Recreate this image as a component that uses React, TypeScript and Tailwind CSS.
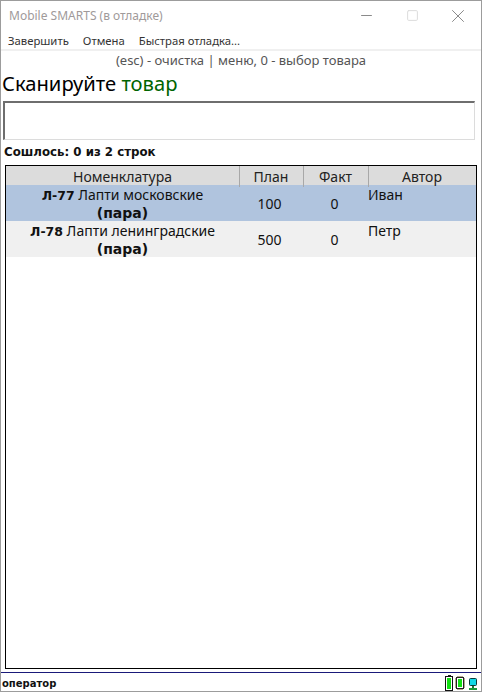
import { Minus, Square, X } from 'lucide-react'

const ROWS = [
  { code: 'Л-77', name: 'Лапти московские', plan: '100', fact: '0', author: 'Иван', bg: 'bg-[#b0c4de]' },
  { code: 'Л-78', name: 'Лапти ленинградские', plan: '500', fact: '0', author: 'Петр', bg: 'bg-[#f0f0f0]' },
]

const COLS = 'grid grid-cols-[234px_64px_65px_1fr]'
const bold = "font-['DejaVu_Sans'] font-bold"

function StatusIcons() {
  return (
    <svg width="34" height="16" viewBox="0 0 34 16" className="shrink-0">
      {/* battery */}
      <rect x="3" y="0" width="3" height="1" fill="#222" />
      <rect x="0.5" y="1.5" width="7" height="14" fill="#fff" stroke="#111" />
      <rect x="2" y="3" width="4" height="11" fill="#12e012" />
      {/* memory chip */}
      <path d="M10 4h1M10 6h1M10 8h1M10 10h1M10 12h1M19 4h1M19 6h1M19 8h1M19 10h1M19 12h1M13 1v1M15 1v1M17 1v1M13 14v1M15 14v1M17 14v1" stroke="#6a4a22" />
      <rect x="11.5" y="2.5" width="7" height="11" fill="#fff" stroke="#222" />
      <rect x="13" y="4" width="4" height="8" fill="#12e012" />
      {/* network */}
      <rect x="24.5" y="3.5" width="7" height="7" rx="1" fill="#12d8e8" stroke="#0a3a3a" />
      <rect x="27" y="11" width="2" height="2" fill="#1a7a3a" />
      <rect x="24" y="13" width="8" height="2" fill="#1a9a3a" />
    </svg>
  )
}

export default function App() {
  return (
    <div className="w-[482px] h-[692px] flex flex-col bg-white border border-[#9c9c9c] overflow-hidden font-['Noto_Sans',sans-serif] text-black">
      {/* Title bar */}
      <div className="h-[29px] shrink-0 flex items-center justify-between pl-[8px]">
        <span className="text-[12px] text-[#a09a9a]">Mobile SMARTS (в отладке)</span>
        <div className="flex items-center text-[#8a8a8a]">
          <span className="w-[46px] flex justify-center"><Minus size={17} strokeWidth={1} absoluteStrokeWidth /></span>
          <span className="w-[46px] flex justify-center text-[#dcdcdc]"><Square size={13} strokeWidth={1} absoluteStrokeWidth /></span>
          <span className="w-[46px] flex justify-center"><X size={22} strokeWidth={1} absoluteStrokeWidth /></span>
        </div>
      </div>

      {/* Menu */}
      <div className="h-[21px] shrink-0 flex items-center gap-[14px] pl-[7px] pt-[3px] border-b-2 border-[#f0f0f0] text-[11.3px] text-[#333]">
        <span>Завершить</span>
        <span>Отмена</span>
        <span>Быстрая отладка...</span>
      </div>

      {/* Scan area */}
      <div className="flex-1 min-h-0 flex flex-col">
        <div className="h-[19px] shrink-0 flex items-center justify-center text-[13px] text-[#555]">
          (esc) - очистка | меню, 0 - выбор товара
        </div>
        <div className="h-[31px] shrink-0 flex items-center pl-[1px] pb-[4px] text-[20.2px]">
          Сканируйте&nbsp;<span className="text-[#006400]">товар</span>
        </div>
        <div className="h-[39px] shrink-0 ml-[2px] mr-[6px] border border-[#dcdcdc] border-t-2 border-l-2 border-t-[#6e6e6e] border-l-[#6e6e6e] bg-white" />
        <div className={`h-[25px] shrink-0 flex items-center pl-[3px] text-[11.8px] text-[#111] ${bold}`}>
          Сошлось: 0 из 2 строк
        </div>

        {/* Table */}
        <div className="flex-1 min-h-0 mx-[4px] mb-[3px] border border-black bg-white text-[14px]">
          <div className={`${COLS} h-[19px] bg-[#dcdcdc] text-[#222]`}>
            <div className="flex items-center justify-center border-r border-[#a8a8a8]">Номенклатура</div>
            <div className="flex items-center justify-center pr-[1px] border-r border-[#a8a8a8]">План</div>
            <div className="flex items-center justify-center pr-[1px] border-r border-[#a8a8a8]">Факт</div>
            <div className="flex items-center justify-center pr-[1px]">Автор</div>
          </div>
          {ROWS.map((r) => (
            <div key={r.code} className={`${COLS} h-[36px] ${r.bg} text-[#111]`}>
              <div className="flex flex-col items-center pr-[1px] leading-[18px]">
                <div className="pt-[1px]">
                  <span className={`text-[12.5px] ${bold}`}>{r.code}</span> {r.name}
                </div>
                <div className={`text-[14px] leading-[17px] ${bold}`}>(пара)</div>
              </div>
              <div className="flex items-center justify-center pr-[5px]">{r.plan}</div>
              <div className="flex items-center justify-center pr-[4px]">{r.fact}</div>
              <div className="-ml-[1px] pt-[1px] leading-[18px]">{r.author}</div>
            </div>
          ))}
        </div>
      </div>

      {/* Status bar */}
      <div className="h-[19px] shrink-0 flex items-center justify-between pl-[1px] pr-[2px] pt-[2px] border-t border-[#1a1a7a]">
        <span className={`text-[10px] text-[#111] ${bold}`}>оператор</span>
        <StatusIcons />
      </div>
    </div>
  )
}
